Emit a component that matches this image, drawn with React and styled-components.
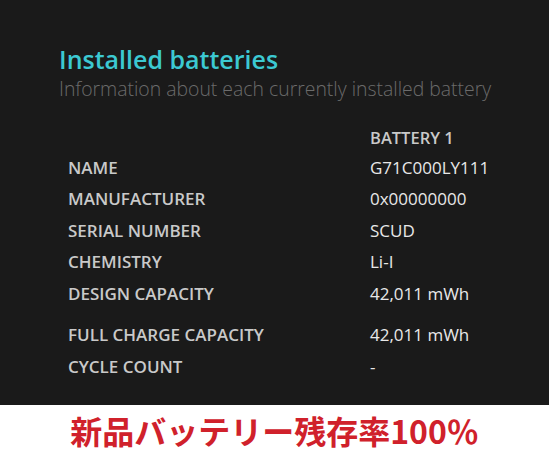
import React from "react";
import styled, { createGlobalStyle } from "styled-components";

const Global = createGlobalStyle`
  html, body { margin: 0; padding: 0; background: #ffffff; }
  body { width: 549px; height: 465px; overflow: hidden; }
`;

const Panel = styled.section`
  background: #1a1a1a;
  height: 405px;
  box-sizing: border-box;
  padding: 43px 0 0 59px;
  font-family: "Open Sans", "Noto Sans", sans-serif;
`;

const Title = styled.h1`
  margin: 0;
  font-size: 25px;
  font-weight: 600;
  line-height: 32px;
  color: #3cc9d2;
`;

const Subtitle = styled.p`
  margin: 0;
  font-size: 19.4px;
  font-weight: 300;
  line-height: 27px;
  color: #6b6b6b;
`;

const Table = styled.div`
  margin-top: 20px;
  padding-left: 9px;
  display: grid;
  grid-template-columns: 302px 1fr;
`;

const Row = styled.div`
  display: contents;
`;

const Label = styled.div`
  font-size: 17px;
  font-weight: 600;
  color: #c9c9c9;
  height: ${(p) => p.$h || 31.5}px;
  line-height: 31px;
  white-space: nowrap;
`;

const Value = styled.div`
  font-weight: ${(p) => (p.$head ? 600 : 400)};
  font-size: ${(p) => (p.$head ? 16.5 : 17)}px;
  color: ${(p) => (p.$head ? "#c9c9c9" : "#e8e8e8")};
  height: ${(p) => p.$h || 31.5}px;
  line-height: 31px;
  white-space: nowrap;
`;

const Banner = styled.div`
  height: 60px;
  display: flex;
  align-items: center;
  justify-content: center;
  padding-bottom: 10px;
  box-sizing: border-box;
  font-family: "Noto Sans CJK JP", "Noto Sans", sans-serif;
  font-weight: 700;
  font-size: 32px;
  color: #d0212b;
  background: #ffffff;
`;

const rows = [
  ["NAME", "G71C000LY111"],
  ["MANUFACTURER", "0x00000000"],
  ["SERIAL NUMBER", "SCUD"],
  ["CHEMISTRY", "Li-I"],
  ["DESIGN CAPACITY", "42,011 mWh", 41.5],
  ["FULL CHARGE CAPACITY", "42,011 mWh"],
  ["CYCLE COUNT", "-"],
];

export default function App() {
  return (
    <>
      <Global />
      <Panel>
        <Title>Installed batteries</Title>
        <Subtitle>Information about each currently installed battery</Subtitle>
        <Table>
          <Row>
            <Label $h={29.5} />
            <Value $head $h={29.5}>BATTERY 1</Value>
          </Row>
          {rows.map(([l, v, h]) => (
            <Row key={l}>
              <Label $h={h}>{l}</Label>
              <Value $h={h}>{v}</Value>
            </Row>
          ))}
        </Table>
      </Panel>
      <Banner>新品バッテリー残存率100％</Banner>
    </>
  );
}
